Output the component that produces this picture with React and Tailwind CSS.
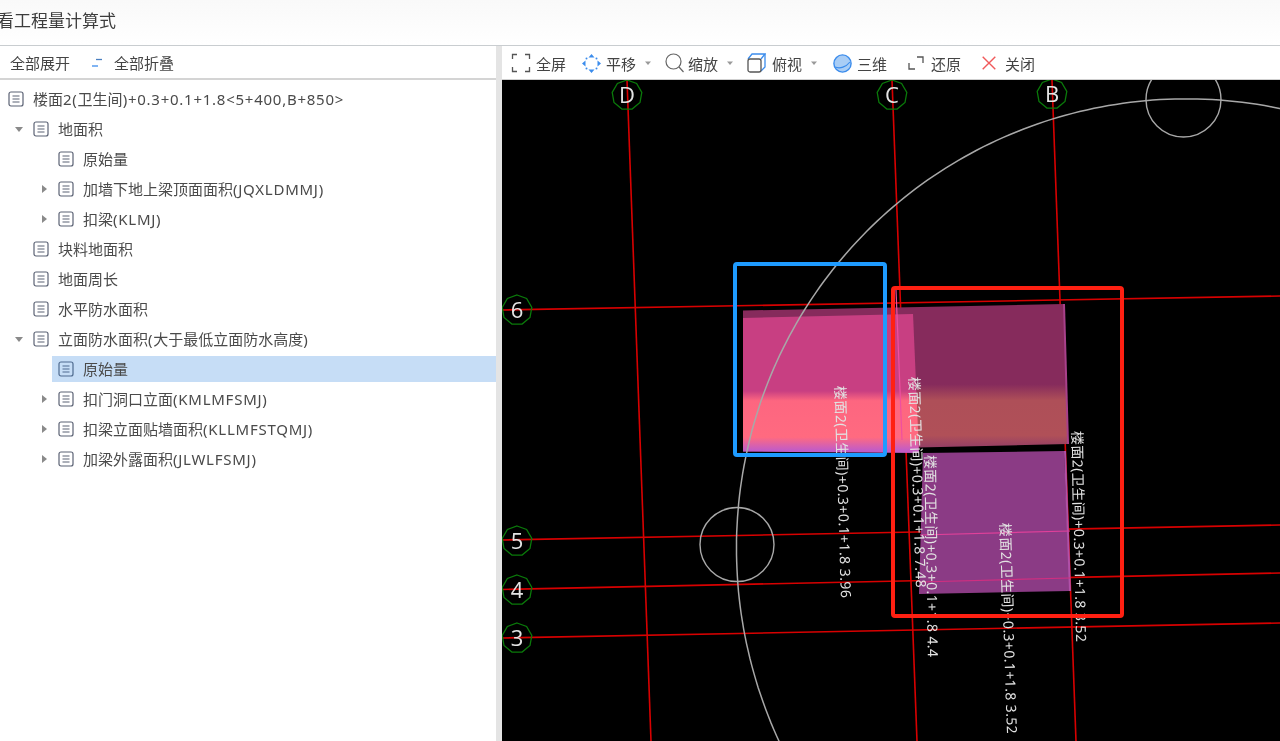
import React from "react";

const FONT = { fontFamily: '"Noto Sans", "Noto Sans CJK SC", sans-serif' };

function DocIcon({ selected }) {
  const c = selected ? "#4f6b8f" : "#5b6274";
  return (
    <svg width="16" height="16" viewBox="0 0 16 16" className="shrink-0" fill="none">
      <rect x="1" y="1" width="14" height="14" rx="2" stroke={c} strokeWidth="1.2" />
      <path d="M4.5 5h7M4.5 8h7M4.5 11h7" stroke={c} strokeWidth="1.2" />
    </svg>
  );
}

function Arrow({ open }) {
  return (
    <svg width="10" height="10" viewBox="0 0 10 10" className="shrink-0">
      {open ? <path d="M1 3h8L5 8z" fill="#8a8a8a" /> : <path d="M3 1l5 4-5 4z" fill="#8a8a8a" />}
    </svg>
  );
}

const rows = [
  { level: 0, text: "楼面2(卫生间)+0.3+0.1+1.8<5+400,B+850>" },
  { level: 1, text: "地面积", arrow: "open" },
  { level: 2, text: "原始量" },
  { level: 2, text: "加墙下地上梁顶面面积(JQXLDMMJ)", arrow: "closed" },
  { level: 2, text: "扣梁(KLMJ)", arrow: "closed" },
  { level: 1, text: "块料地面积" },
  { level: 1, text: "地面周长" },
  { level: 1, text: "水平防水面积" },
  { level: 1, text: "立面防水面积(大于最低立面防水高度)", arrow: "open" },
  { level: 2, text: "原始量", selected: true },
  { level: 2, text: "扣门洞口立面(KMLMFSMJ)", arrow: "closed" },
  { level: 2, text: "扣梁立面贴墙面积(KLLMFSTQMJ)", arrow: "closed" },
  { level: 2, text: "加梁外露面积(JLWLFSMJ)", arrow: "closed" },
];

function Runs({ text }) {
  const parts = text.match(/[\u4e00-\u9fff]+|[^\u4e00-\u9fff]+/g);
  return parts.map((p, i) =>
    /[\u4e00-\u9fff]/.test(p) ? (
      <span key={i}>{p}</span>
    ) : (
      <span key={i} className="tracking-[0.75px]">{p}</span>
    )
  );
}

function Row({ level, text, arrow, selected }) {
  const arrowBox = level === 1 ? "w-[33px] pl-[14px]" : level === 2 ? "w-[58px] pl-[39px]" : "w-[8px]";
  return (
    <div className="h-[30px] flex items-center">
      <div className={`${arrowBox} shrink-0 flex items-center`}>{arrow && <Arrow open={arrow === "open"} />}</div>
      <div className={`h-[26px] flex items-center grow ${selected ? "bg-[#c6ddf6] -ml-[6px] pl-[6px]" : ""}`}>
        <DocIcon selected={selected} />
        <span className="ml-[9px] text-[15px] text-[#4a4a4a] whitespace-nowrap">
          <Runs text={text} />
        </span>
      </div>
    </div>
  );
}

const Caret = () => (
  <svg width="8" height="6" viewBox="0 0 8 6" className="shrink-0">
    <path d="M1 1.5h6L4 5z" fill="#9a9a9a" />
  </svg>
);

const FullIcon = () => (
  <svg width="20" height="20" viewBox="0 0 20 20" fill="none" stroke="#555" strokeWidth="1.3">
    <path d="M6 1.5H1.5V6M14 1.5h4.5V6M6 18.5H1.5V14M14 18.5h4.5V14" />
  </svg>
);
const PanIcon = () => (
  <svg width="19" height="19" viewBox="0 0 19 19" fill="#3b8cec">
    <path d="M9.5 0l3 3.5h-6zM9.5 19l3-3.5h-6zM0 9.5l3.5-3v6zM19 9.5l-3.5-3v6z" />
    <circle cx="4.5" cy="4.5" r="1" />
    <circle cx="14.5" cy="4.5" r="1" />
    <circle cx="4.5" cy="14.5" r="1" />
    <circle cx="14.5" cy="14.5" r="1" />
  </svg>
);
const ZoomIcon = () => (
  <svg width="19" height="20" viewBox="0 0 19 20" fill="none" stroke="#666" strokeWidth="1.2">
    <circle cx="8.5" cy="8.5" r="7.5" />
    <path d="M14 14l4.5 5" />
  </svg>
);
const CubeIcon = () => (
  <svg width="19" height="20" viewBox="0 0 19 20" fill="none" strokeWidth="1.3">
    <path d="M1 6l4-5h13l-4 5" stroke="#3b8cec" />
    <path d="M18 1v13l-4 4" stroke="#3b8cec" />
    <rect x="1" y="6" width="13" height="13" rx="2" stroke="#555" />
  </svg>
);
const SphereIcon = () => (
  <svg width="19" height="19" viewBox="0 0 19 19">
    <circle cx="9.5" cy="9.5" r="8.6" fill="#a9cdf5" stroke="#3b8cec" strokeWidth="1.4" />
    <path d="M2 13c5 2 11 0 15-5" fill="none" stroke="#3b8cec" strokeWidth="1.2" />
  </svg>
);
const RestoreIcon = () => (
  <svg width="16" height="14" viewBox="0 0 16 14" fill="none" stroke="#555" strokeWidth="1.3">
    <path d="M1 7v6h6M9 1h6v6" />
  </svg>
);
const CloseIcon = () => (
  <svg width="14" height="14" viewBox="0 0 14 14" fill="none" stroke="#f0595a" strokeWidth="1.4">
    <path d="M.7.7l12.6 12.6M13.3.7L.7 13.3" />
  </svg>
);

function Tool({ icon, label, caret, className, gap }) {
  return (
    <div className={`flex items-center shrink-0 ${className}`}>
      {icon}
      <span className={`${gap} pt-[2px] text-[15px] text-[#444] whitespace-nowrap`}>{label}</span>
      {caret && <span className="ml-[8px]"><Caret /></span>}
    </div>
  );
}

const nonagon = (cx, cy, r = 15) =>
  Array.from({ length: 9 }, (_, i) => {
    const a = (Math.PI * 2 * i) / 9 - Math.PI / 2;
    return `${(cx + r * Math.cos(a)).toFixed(1)},${(cy + r * Math.sin(a)).toFixed(1)}`;
  }).join(" ");

const axes = [
  ["D", 627, 95],
  ["C", 892, 95],
  ["B", 1052, 94],
  ["6", 517, 310],
  ["5", 517, 541],
  ["4", 517, 590],
  ["3", 517, 638],
];

const redLines = [
  [627, 80, 651, 741],
  [892, 80, 917, 741],
  [1052, 80, 1076, 741],
  [502, 310, 1280, 296],
  [502, 540, 1280, 525],
  [502, 589.5, 1280, 573],
  [502, 638, 1280, 623],
];

// The large arc is slightly distorted by the view's perspective: radius varies with angle.
const arcPoints = Array.from({ length: 151 }, (_, i) => {
  const deg = i - 35;
  const rad = (deg * Math.PI) / 180;
  const r = 415 + 0.0045 * (deg - 42) * (deg - 42);
  return `${(1160 - r * Math.cos(rad)).toFixed(1)},${(525 - r * Math.sin(rad)).toFixed(1)}`;
}).join(" ");

const labels = [
  { t: "楼面2(卫生间)+0.3+0.1+1.8 3.96", x: 835, y: 386, a: 88.4, l: 212 },
  { t: "楼面2(卫生间)+0.3+0.1+1.8 7.48", x: 909, y: 377, a: 88.1, l: 211 },
  { t: "楼面2(卫生间)+0.3+0.1+1.8 4.4", x: 925, y: 455, a: 89.2, l: 202 },
  { t: "楼面2(卫生间)+0.3+0.1+1.8 3.52", x: 1000, y: 523, a: 88.1, l: 211 },
  { t: "楼面2(卫生间)+0.3+0.1+1.8 3.52", x: 1072, y: 431, a: 88.9, l: 211 },
];

function Canvas() {
  return (
    <svg viewBox="502 80 778 661" className="block w-full h-full">
      <defs>
        <linearGradient id="dark" gradientUnits="userSpaceOnUse" x1="0" y1="304" x2="0" y2="450">
          <stop offset="0" stopColor="#862b5c" />
          <stop offset="0.55" stopColor="#862b5c" />
          <stop offset="0.66" stopColor="#ae4f58" />
          <stop offset="0.9" stopColor="#b05058" />
          <stop offset="1" stopColor="#8e3a68" />
        </linearGradient>
        <linearGradient id="bright" gradientUnits="userSpaceOnUse" x1="0" y1="314" x2="0" y2="454">
          <stop offset="0" stopColor="#c83f82" />
          <stop offset="0.55" stopColor="#c83f82" />
          <stop offset="0.62" stopColor="#fd6680" />
          <stop offset="0.88" stopColor="#ff6a80" />
          <stop offset="0.97" stopColor="#c45cc4" />
        </linearGradient>
      </defs>

      {redLines.map(([a, b, c, d], i) => (
        <line key={i} x1={a} y1={b} x2={c} y2={d} stroke="#d80000" strokeWidth="1.6" />
      ))}

      <polygon points="743,310.5 1064,304 1068,444 743,451.5" fill="url(#dark)" />
      <polygon points="1063,304 1065,304 1069,444 1067,444" fill="#a8408a" />
      <polygon points="743,318 913,314 919,453 743,451.5" fill="url(#bright)" />
      <polygon points="923,453 1064,451 1070,591 919,594" fill="#8b3b85" />
      <polygon points="1064,451 1066,451 1071,591 1069,591" fill="#b050a8" />
      <line x1="896" y1="290" x2="902" y2="440" stroke="#f04fa0" strokeWidth="1.2" />
      <line x1="920" y1="535" x2="1070" y2="531" stroke="#e0409a" strokeWidth="1.2" />
      <line x1="919" y1="582" x2="1070" y2="578" stroke="#d02f80" strokeWidth="1.2" />

      <polyline points={arcPoints} fill="none" stroke="#a8a8a8" strokeWidth="1.5" />
      <circle cx="1183.5" cy="99.5" r="37.5" fill="none" stroke="#a8a8a8" strokeWidth="1.4" />
      <circle cx="737" cy="544.5" r="37" fill="none" stroke="#a8a8a8" strokeWidth="1.4" />

      {axes.map(([t, x, y]) => (
        <g key={t}>
          <polygon points={nonagon(x, y)} fill="none" stroke="#0a7a0a" strokeWidth="1.3" />
          <text x={x} y={y + 8} textAnchor="middle" fontSize="22" fill="#e4e4e4" style={{ fontFamily: '"Open Sans", sans-serif' }}>
            {t}
          </text>
        </g>
      ))}

      {labels.map((l, i) => (
        <text
          key={i}
          transform={`translate(${l.x} ${l.y}) rotate(${l.a})`}
          fontSize="14"
          fill="#e2e2e2"
          textLength={l.l}
          lengthAdjust="spacing"
          style={FONT}
        >
          {l.t}
        </text>
      ))}

      <rect x="735" y="264" width="150" height="191" rx="2" fill="none" stroke="#1e9bff" strokeWidth="4" />
      <rect x="893" y="288" width="229" height="328" rx="2" fill="none" stroke="#ff2012" strokeWidth="4" />
    </svg>
  );
}

export default function App() {
  return (
    <div className="w-[1280px] h-[741px] overflow-hidden flex flex-col bg-white blur-[0.3px]" style={FONT}>
      <header className="h-[46px] shrink-0 border-b border-[#c9cdd0] bg-gradient-to-b from-[#f9f9f9] to-white overflow-hidden flex items-center pb-[3px]">
        <h1 className="-ml-[3px] text-[17px] font-normal text-[#3c3c3c] whitespace-nowrap">看工程量计算式</h1>
      </header>
      <div className="flex grow min-h-0">
        <aside className="w-[496px] shrink-0 flex flex-col bg-white">
          <div className="h-[34px] shrink-0 border-b-2 border-[#d4d4d4] flex items-center pt-[2px] text-[15px] text-[#444]">
            <span className="ml-[10px]">全部展开</span>
            <svg width="12" height="10" viewBox="0 0 12 10" className="ml-[21px]" fill="none" strokeWidth="1.3">
              <path d="M5 1.5h6" stroke="#4a7fc0" />
              <path d="M1 8h6" stroke="#3b8cec" />
            </svg>
            <span className="ml-[11px]">全部折叠</span>
          </div>
          <div className="pt-[4px]">
            {rows.map((r, i) => (
              <Row key={i} {...r} />
            ))}
          </div>
        </aside>
        <div className="w-[6px] shrink-0 bg-[#e4e4e4]" />
        <main className="grow flex flex-col min-w-0">
          <div className="h-[34px] shrink-0 bg-white border-b border-[#cfcfcf] flex items-center pt-[1px]">
            <Tool className="ml-[9px]" gap="ml-[5px]" icon={<FullIcon />} label="全屏" />
            <Tool className="ml-[16px]" gap="ml-[5px]" icon={<PanIcon />} label="平移" caret />
            <Tool className="ml-[13px]" gap="ml-[4px]" icon={<ZoomIcon />} label="缩放" caret />
            <Tool className="ml-[13px]" gap="ml-[6px]" icon={<CubeIcon />} label="俯视" caret />
            <Tool className="ml-[15px]" gap="ml-[5px]" icon={<SphereIcon />} label="三维" />
            <Tool className="ml-[21px]" gap="ml-[7px]" icon={<RestoreIcon />} label="还原" />
            <Tool className="ml-[21px]" gap="ml-[9px]" icon={<CloseIcon />} label="关闭" />
          </div>
          <div className="grow min-h-0 bg-black">
            <Canvas />
          </div>
        </main>
      </div>
    </div>
  );
}
